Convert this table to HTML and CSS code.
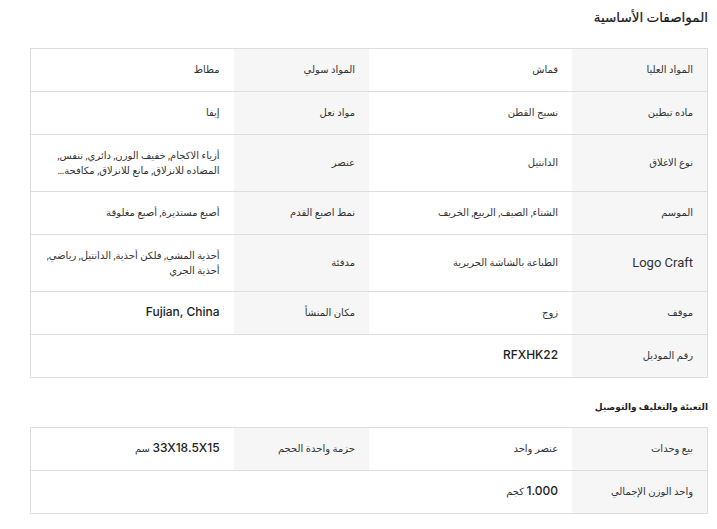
FILE: index.html
```html
<!DOCTYPE html>
<html lang="ar" dir="rtl">
<head>
<meta charset="utf-8">
<title>المواصفات</title>
<link rel="stylesheet" href="styles.css">
</head>
<body>
<div class="page">
  <h2 class="title">المواصفات الأساسية</h2>
  <table class="specs">
    <colgroup><col class="c-l"><col class="c-v"><col class="c-l"><col class="c-v"></colgroup>
    <tr>
      <th>المواد العليا</th><td>قماش</td>
      <th>المواد سولي</th><td>مطاط</td>
    </tr>
    <tr>
      <th>ماده تبطين</th><td>نسيج القطن</td>
      <th>مواد نعل</th><td>إيفا</td>
    </tr>
    <tr>
      <th>نوع الاغلاق</th><td>الدانتيل</td>
      <th>عنصر</th><td><div class="clamp">أزياء الاكجام, خفيف الوزن, دائري, تنفس, المضاده للانزلاق, مانع للانزلاق, مكافحة الرائحة, مقاوم للاهتراء</div></td>
    </tr>
    <tr>
      <th>الموسم</th><td>الشتاء, الصيف, الربيع, الخريف</td>
      <th>نمط اصبع القدم</th><td>أصبع مستديرة, أصبع مغلوقة</td>
    </tr>
    <tr>
      <th class="latin">Logo Craft</th><td>الطباعة بالشاشة الحريرية</td>
      <th>مدفئة</th><td><div class="multi">أحذية المشي, فلكن أحذية, الدانتيل, رياضي, أحذية الجري</div></td>
    </tr>
    <tr>
      <th>موقف</th><td>زوج</td>
      <th>مكان المنشأ</th><td><span class="num">Fujian, China</span></td>
    </tr>
    <tr>
      <th>رقم الموديل</th><td colspan="3"><span class="num">RFXHK22</span></td>
    </tr>
  </table>

  <h3 class="subtitle">التعبئة والتغليف والتوصيل</h3>
  <table class="specs">
    <colgroup><col class="c-l"><col class="c-v"><col class="c-l"><col class="c-v"></colgroup>
    <tr>
      <th>بيع وحدات</th><td>عنصر واحد</td>
      <th>حزمة واحدة الحجم</th><td><span class="num">33X18.5X15</span> سم</td>
    </tr>
    <tr>
      <th>واحد الوزن الإجمالي</th><td colspan="3"><span class="num">1.000</span> كجم</td>
    </tr>
  </table>
</div>
</body>
</html>
```
FILE: styles.css
```css
html, body {
  margin: 0;
  padding: 0;
  background: #ffffff;
}
body {
  font-family: Roboto, "DejaVu Sans", sans-serif;
  color: #222222;
}
.page {
  padding: 7px 9px 0 30px;
}
.title {
  margin: 0 0 21px 0;
  font-size: 13.5px;
  font-weight: 400;
  line-height: 20px;
  color: #1a1a1a;
  -webkit-text-stroke: 0.2px #1a1a1a;
}
.subtitle {
  margin: 21px 0 12px 0;
  font-size: 9px;
  font-weight: 700;
  line-height: 16px;
  color: #222222;
}
.specs {
  width: 100%;
  table-layout: fixed;
  border-collapse: collapse;
  border: 1px solid #dddddd;
}
.c-l { width: 20%; }
.c-v { width: 30%; }
.specs th,
.specs td {
  border-top: 1px solid #dddddd;
  border-bottom: 1px solid #dddddd;
  padding: 13px 14px;
  text-align: right;
  vertical-align: middle;
  font-size: 10px;
  line-height: 16px;
  font-weight: 400;
  color: #333333;
}
.specs th {
  background: #f6f6f6;
}
.specs td {
  background: #ffffff;
}
.specs th.latin {
  font-size: 13px;
  line-height: 16px;
}
.num {
  font-family: Inter, Roboto, sans-serif;
  font-weight: 500;
  font-size: 12px;
  line-height: 14px;
  color: #222222;
}
.clamp {
  display: -webkit-box;
  -webkit-line-clamp: 2;
  -webkit-box-orient: vertical;
  overflow: hidden;
  line-height: 15px;
}
.multi {
  line-height: 15px;
}
```
